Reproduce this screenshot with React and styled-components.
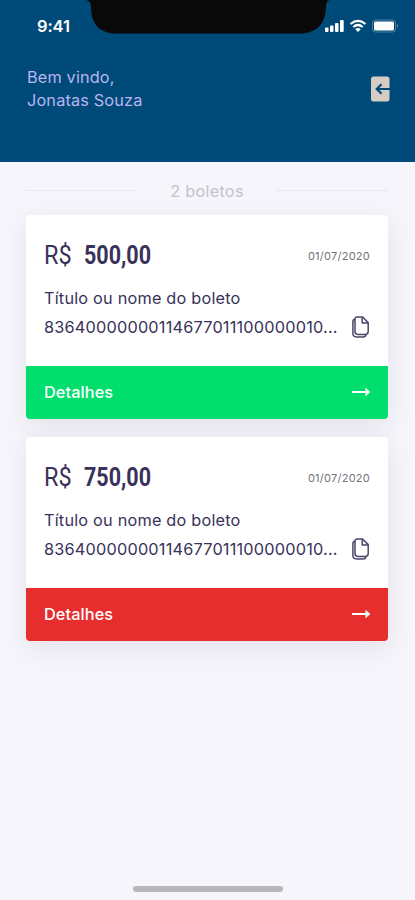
import styled, {createGlobalStyle} from 'styled-components';

const palette = {
	blue: '#004a79',
	lilac: '#b9b5ef',
	ink: '#38325a',
	page: '#f6f5fb',
	green: '#00df6d',
	red: '#e62e2e',
};

const GlobalStyle = createGlobalStyle`
	*{
		box-sizing: border-box;
	}
	body{
		margin: 0;
		background: ${palette.page};
		font-family: Inter, 'Liberation Sans', sans-serif;
	}
	p, h1, h2{
		margin: 0;
	}
	svg{
		display: block;
	}
`;

const Screen = styled.div`
	width: 415px;
	height: 900px;
	display: flex;
	flex-direction: column;
	background: ${palette.page};
	overflow: hidden;
`;

const Header = styled.header`
	height: 162px;
	flex: none;
	background: ${palette.blue};
`;

const StatusBar = styled.div`
	height: 52px;
	padding: 0 16px 0 37px;
	display: flex;
	justify-content: space-between;
	align-items: center;
	position: relative;
`;

const Notch = styled.svg`
	position: absolute;
	left: 86px;
	top: 0;
`;

const Clock = styled.span`
	color: #fff;
	font-size: 16.5px;
	font-weight: 600;
	letter-spacing: -0.1px;
`;

const Welcome = styled.div`
	display: flex;
	justify-content: space-between;
	padding: 14px 25px 0 27px;
`;

const Greeting = styled.h1`
	color: ${palette.lilac};
	font-size: 16.3px;
	font-weight: 400;
	line-height: 23px;
	letter-spacing: 0.15px;
`;

const LogoutButton = styled.button`
	width: 19px;
	height: 26px;
	margin-top: 10px;
	padding: 0;
	border: none;
	background: none;
`;

const Content = styled.main`
	flex: 1;
	padding: 0 27px 0 26px;
`;

const Counter = styled.div`
	height: 53px;
	padding-top: 4px;
	display: flex;
	align-items: center;
	justify-content: space-between;
	color: #c3c1ca;
	font-size: 16.3px;
	letter-spacing: 0.25px;
	&:before, &:after{
		content: '';
		width: 112px;
		height: 1px;
		background: #e8e7ed;
	}
`;

const CardList = styled.div`
	display: flex;
	flex-direction: column;
	gap: 18px;
`;

const Card = styled.article`
	height: 204px;
	border-radius: 4px;
	background: #fff;
	overflow: hidden;
	box-shadow: 0 8px 26px rgba(40, 40, 70, 0.09);
`;

const CardBody = styled.div`
	height: 151px;
	padding: 25px 18px 0;
	color: ${palette.ink};
`;

const AmountRow = styled.div`
	height: 31px;
	display: flex;
	align-items: center;
	justify-content: space-between;
`;

const Amount = styled.h2`
	display: flex;
	font-family: Roboto, 'Liberation Sans', sans-serif;
	font-size: 25px;
	font-weight: 400;
	line-height: 31px;
`;

const Currency = styled.span`
	width: 40px;
	transform: scaleX(0.94);
	transform-origin: left;
`;

const Value = styled.span`
	font-weight: 700;
	transform: scaleX(0.86);
	transform-origin: left;
`;

const DueDate = styled.time`
	color: #74727c;
	font-size: 11px;
	letter-spacing: 0.25px;
`;

const Title = styled.p`
	margin-top: 16px;
	font-size: 16.3px;
	line-height: 23px;
	letter-spacing: 0.2px;
`;

const CodeRow = styled.div`
	height: 34px;
	display: flex;
	align-items: center;
	justify-content: space-between;
`;

const Code = styled.p`
	font-size: 16.3px;
	letter-spacing: 0.2px;
	white-space: nowrap;
`;

const Details = styled.footer`
	height: 53px;
	padding: 0 17px 1px 18px;
	display: flex;
	align-items: center;
	justify-content: space-between;
	background: ${({$color}) => $color};
	color: #fff;
	font-size: 16.3px;
	font-weight: 500;
	letter-spacing: 0.1px;
`;

const HomeIndicator = styled.div`
	width: 150px;
	height: 6px;
	margin: 0 auto 8px 133px;
	border-radius: 3px;
	background: #b8b6bb;
`;

const boletos = [
	{id: 1, value: '500,00', date: '01/07/2020', color: palette.green},
	{id: 2, value: '750,00', date: '01/07/2020', color: palette.red},
];

const StatusIcons = () => (
	<svg width="75" height="14" viewBox="0 0 75 14" fill="#fff">
		<rect x="1" y="8.5" width="3.5" height="4.5" rx="1" />
		<rect x="6" y="6.5" width="3.5" height="6.5" rx="1" />
		<rect x="11" y="4" width="3.5" height="9" rx="1" />
		<rect x="16" y="1" width="3.7" height="12" rx="1" />
		<g fill="none" stroke="#fff" strokeWidth="2.2">
			<path d="M26.5 5 Q34 -1.3 41.5 5" />
			<path d="M29.3 8 Q34 4 38.7 8" />
		</g>
		<path d="M31.3 10.2 Q34 8 36.7 10.2 L34 12.9 Z" />
		<rect x="48.5" y="1" width="23" height="12" rx="3" fill="none" stroke="#fff" strokeOpacity="0.3" />
		<rect x="50" y="2.5" width="20" height="9" rx="1.5" />
		<path d="M73 5 Q75 7 73 9 Z" opacity="0.45" />
	</svg>
);

const LogoutIcon = () => (
	<svg width="19" height="26" viewBox="0 0 19 26">
		<rect x="0" y="0.5" width="18.5" height="25" rx="2.5" fill="#d5ccc3" />
		<path d="M19 13 H6 M10.500 8.2 L5.700 13 L10.500 17.8" fill="none" stroke={palette.blue} strokeWidth="2.2" />
	</svg>
);

const CopyIcon = () => (
	<svg width="18" height="22" viewBox="0 0 18 22" fill="none" stroke="#4b4669" strokeWidth="1.5" strokeLinejoin="round">
		<path d="M5.3 1 H10.6 L16.2 6.6 V15.6 Q16.2 18.4 13.4 18.4 H5.8 Q3 18.4 3 15.6 V3.2 Q3 1 5.3 1 Z" />
		<path d="M10.2 1.3 V7.1 H15.9" />
		<path d="M3 3 Q0.9 3.500 0.9 6 V17.3 Q0.9 20.9 4.500 20.9 H11.2 Q13.6 20.9 14 18.6" />
	</svg>
);

const ArrowIcon = () => (
	<svg width="19" height="10" viewBox="0 0 19 10">
		<path d="M0 5 H15" stroke="#fff" strokeWidth="2" />
		<path d="M13.5 0.8 L18.3 5 L13.5 9.2 Z" fill="#fff" />
	</svg>
);

const BoletoCard = ({boleto}) => {
	return(
		<Card>
			<CardBody>
				<AmountRow>
					<Amount><Currency>R$</Currency><Value>{boleto.value}</Value></Amount>
					<DueDate>{boleto.date}</DueDate>
				</AmountRow>
				<Title>Título ou nome do boleto</Title>
				<CodeRow>
					<Code>83640000000114677011100000010...</Code>
					<CopyIcon />
				</CodeRow>
			</CardBody>
			<Details $color={boleto.color}>
				Detalhes
				<ArrowIcon />
			</Details>
		</Card>
	)
}

const App = () => {
	return(
		<>
			<GlobalStyle />
			<Screen>
				<Header>
					<StatusBar>
						<Notch width="244" height="34" viewBox="0 0 244 34">
							<path d="M0 0 H244 Q240.500 0 240 6 C240 23 231 33.500 214 33.500 H30 C13 33.500 5 23 5 7 Q5 1 0 0 Z" fill="#090909" />
						</Notch>
						<Clock>9:41</Clock>
						<StatusIcons />
					</StatusBar>
					<Welcome>
						<Greeting>Bem vindo,<br />Jonatas Souza</Greeting>
						<LogoutButton><LogoutIcon /></LogoutButton>
					</Welcome>
				</Header>
				<Content>
					<Counter>{boletos.length} boletos</Counter>
					<CardList>
						{boletos.map(boleto=>(
							<BoletoCard boleto={boleto} key={boleto.id} />
						))}
					</CardList>
				</Content>
				<HomeIndicator />
			</Screen>
		</>
	)
}

export default App;
